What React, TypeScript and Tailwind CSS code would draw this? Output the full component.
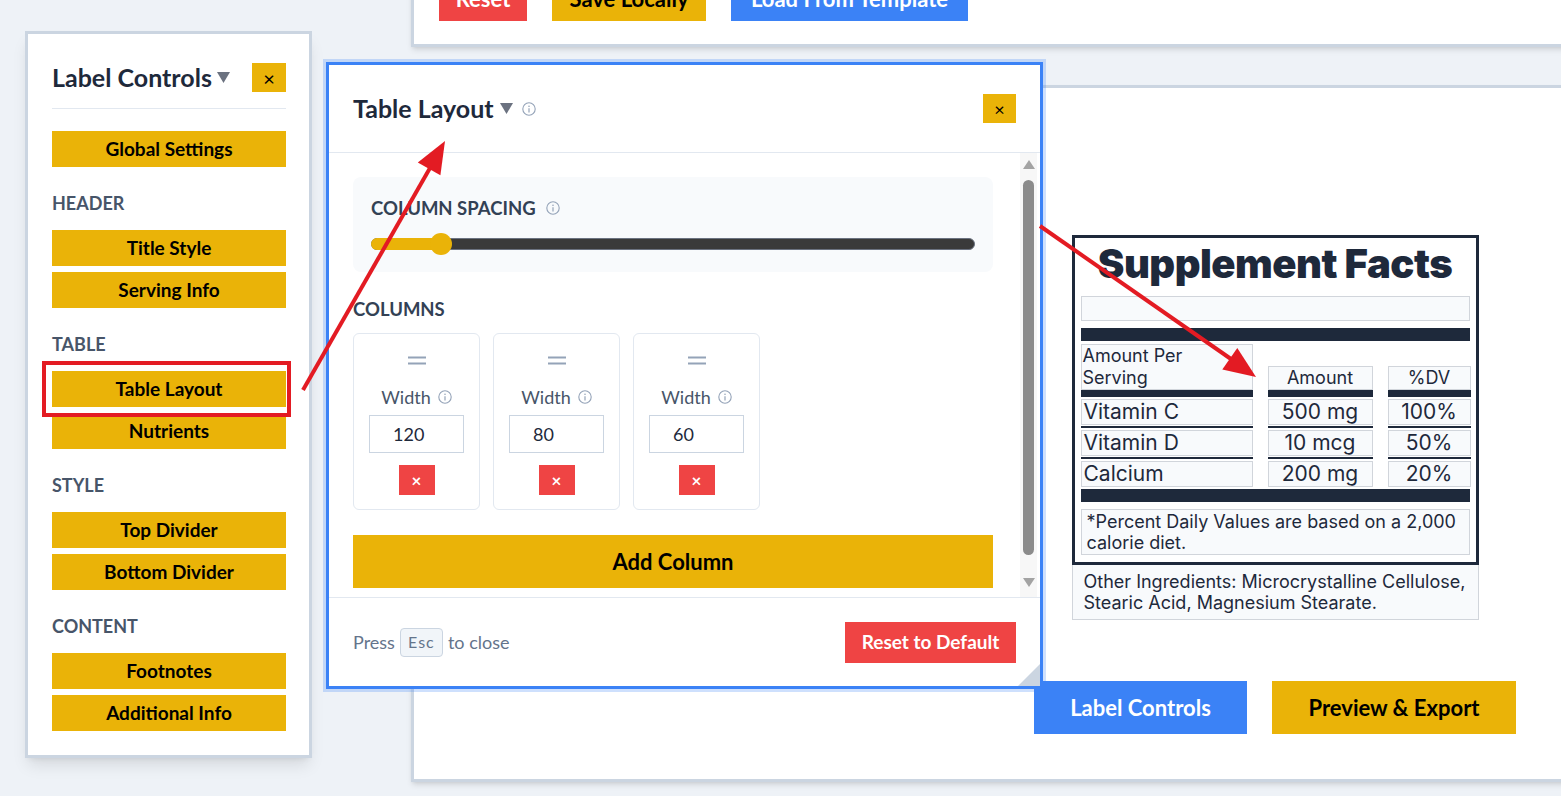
import React from "react";

/* small drawings */
function InfoIcon({ size = 14 }: { size?: number }) {
    return (
        <svg width={size} height={size} viewBox="0 0 14 14" fill="none">
            <circle cx="7" cy="7" r="6.2" stroke="#94a3b8" strokeWidth="1.1" />
            <circle cx="7" cy="4.2" r="0.8" fill="#94a3b8" />
            <path d="M7 6.2v4.4" stroke="#94a3b8" strokeWidth="1.2" />
        </svg>
    );
}

function Caret() {
    return (
        <svg width="13" height="11" viewBox="0 0 13 11">
            <polygon points="0,0 13,0 6.5,11" fill="#6b7280" />
        </svg>
    );
}

function Handle() {
    return (
        <svg width="20" height="9" viewBox="0 0 20 9">
            <path d="M1 1.5h18M1 7.5h18" stroke="#94a3b8" strokeWidth="2" />
        </svg>
    );
}

function TopBar() {
    return (
        <div className="-mt-[25px] w-[1725px] border-b-[3px] border-l-[3px] border-[#cbd5e1] bg-white pb-[23px] pl-[25px] shadow-md">
            <div className="flex gap-[25px] text-[22px] font-bold">
                <button className="h-[46px] w-[88px] bg-[#ef4444] text-white">Reset</button>
                <button className="h-[46px] w-[154px] bg-[#eab308] text-black">Save Locally</button>
                <button className="h-[46px] w-[237px] bg-[#3b82f6] text-white">Load From Template</button>
            </div>
        </div>
    );
}

function SupplementLabel() {
    const rows = [
        ["Vitamin C", "500 mg", "100%"],
        ["Vitamin D", "10 mcg", "50%"],
        ["Calcium", "200 mg", "20%"],
    ];
    const cell = "h-[26px] border border-[#d1d5db] bg-[#f8fafc] text-[21px] leading-[24px]";
    return (
        <div className="w-[407px] font-['Inter',sans-serif] text-[#1e293b]">
            <div className="border-[3px] border-[#1e293b] px-[6px] pb-[7px]">
                <h1 className="mt-[1px] h-[50px] text-center text-[40px] font-black leading-[50px] tracking-[-0.5px]">
                    Supplement Facts
                </h1>
                <div className="mt-[7px] h-[25px] border border-[#d1d5db] bg-[#f8fafc]" />
                <div className="mt-[7px] h-[13px] bg-[#1e293b]" />
                <div className="mt-[3px] grid grid-cols-[172px_105px_83px] items-end gap-x-[15px]">
                    <div className="h-[46px] border border-[#d1d5db] bg-[#f8fafc] pl-[1px] text-[18px] leading-[22px]">
                        Amount Per<br />Serving
                    </div>
                    <div className="h-[24px] border border-[#d1d5db] bg-[#f8fafc] text-center text-[18px] leading-[22px]">Amount</div>
                    <div className="h-[24px] border border-[#d1d5db] bg-[#f8fafc] text-center text-[18px] leading-[22px]">%DV</div>
                    <div className="h-[7px] bg-[#1e293b]" />
                    <div className="h-[7px] bg-[#1e293b]" />
                    <div className="h-[7px] bg-[#1e293b]" />
                    {rows.map((row, i) => (
                        <React.Fragment key={row[0]}>
                            {i > 0 && (
                                <>
                                    <div className="mt-[1px] h-[2px] bg-[#1e293b]" />
                                    <div className="mt-[1px] h-[2px] bg-[#1e293b]" />
                                    <div className="mt-[1px] h-[2px] bg-[#1e293b]" />
                                </>
                            )}
                            <div className={`mt-[2px] pl-[2px] ${cell}`}>{row[0]}</div>
                            <div className={`mt-[2px] text-center ${cell}`}>{row[1]}</div>
                            <div className={`mt-[2px] text-center ${cell}`}>{row[2]}</div>
                        </React.Fragment>
                    ))}
                </div>
                <div className="mt-[2px] h-[13px] bg-[#1e293b]" />
                <div className="mt-[7px] h-[46px] border border-[#d1d5db] bg-[#f8fafc] px-[5px] pt-[1px] text-[18px] leading-[21px]">
                    *Percent Daily Values are based on a 2,000 calorie diet.
                </div>
            </div>
            <div className="h-[55px] border border-t-0 border-[#d1d5db] bg-[#f8fafc] px-[11px] pt-[6px] text-[18px] leading-[21px]">
                Other Ingredients: Microcrystalline Cellulose, Stearic Acid, Magnesium Stearate.
            </div>
        </div>
    );
}

function MainCard() {
    return (
        <div className="mt-[38px] flex h-[697px] w-[1725px] flex-col items-center border-y-[3px] border-l-[3px] border-[#cbd5e1] bg-white pt-[147px] shadow-md">
            <SupplementLabel />
            <div className="mt-[61px] flex gap-[25px] text-[22px] font-bold">
                <button className="h-[53px] w-[213px] bg-[#3b82f6] text-white">Label Controls</button>
                <button className="h-[53px] w-[244px] bg-[#eab308] text-black">Preview &amp; Export</button>
            </div>
        </div>
    );
}

function ControlsPanel() {
    const sections = [
        { title: "", items: ["Global Settings"] },
        { title: "Header", items: ["Title Style", "Serving Info"] },
        { title: "Table", items: ["Table Layout", "Nutrients"] },
        { title: "Style", items: ["Top Divider", "Bottom Divider"] },
        { title: "Content", items: ["Footnotes", "Additional Info"] },
    ];
    return (
        <div className="absolute left-[25px] top-[31px] h-[727px] w-[287px] border-[3px] border-[#cbd5e1] bg-white pl-[24px] pr-[23px] pt-[29px] shadow-lg">
            <div className="flex h-[46px] items-start justify-between border-b border-[#e2e8f0]">
                <div className="flex h-[29px] items-center gap-[5px] text-[25px] font-bold text-[#1e293b]">
                    Label Controls
                    <Caret />
                </div>
                <button className="flex h-[29px] w-[34px] items-center justify-center bg-[#eab308] text-[20px] leading-none text-black">
                    ×
                </button>
            </div>
            <div className="pt-[22px]">
                {sections.map((section) => (
                    <div key={section.items[0]}>
                        {section.title && (
                            <div className="mb-[15px] mt-[24px] text-[18px] font-bold uppercase leading-[24px] text-[#475569]">
                                {section.title}
                            </div>
                        )}
                        <div className="flex flex-col gap-[6px]">
                            {section.items.map((item) => (
                                <button key={item} className="h-[36px] w-full bg-[#eab308] text-[19px] font-bold text-black">
                                    {item}
                                </button>
                            ))}
                        </div>
                    </div>
                ))}
            </div>
        </div>
    );
}

function ColumnCard({ width }: { width: string }) {
    return (
        <div className="flex h-[177px] w-[127px] flex-col items-center rounded-md border border-[#e2e8f0] pt-[22px]">
            <Handle />
            <div className="mt-[20px] flex items-center gap-[7px] text-[18px] leading-[24px] text-[#475569]">
                Width
                <InfoIcon />
            </div>
            <div className="mt-[6px] flex h-[38px] w-[95px] items-center border border-[#cbd5e1] pl-[23px] text-[18px] text-[#1e293b]">
                {width}
            </div>
            <button className="mt-[12px] flex h-[30px] w-[36px] items-center justify-center bg-[#ef4444] text-[17px] font-bold leading-none text-white">
                ×
            </button>
        </div>
    );
}

function Scrollbar() {
    return (
        <div className="mr-[3px] flex w-[17px] flex-col items-center bg-[#f7f7f7] pt-[7px]">
            <svg width="12" height="9" viewBox="0 0 12 9">
                <polygon points="6,0 12,9 0,9" fill="#a3a3a3" />
            </svg>
            <div className="mt-[11px] h-[375px] w-[11px] rounded-full bg-[#8b8b8b]" />
            <svg className="mt-[23px]" width="12" height="9" viewBox="0 0 12 9">
                <polygon points="0,0 12,0 6,9" fill="#a3a3a3" />
            </svg>
        </div>
    );
}

function TableLayoutModal() {
    return (
        <div className="absolute left-[326px] top-[62px] flex h-[627px] w-[717px] flex-col border-[3px] border-[#3b82f6] bg-white shadow-[0_0_0_3px_rgba(59,130,246,0.25)]">
            <div className="flex h-[88px] shrink-0 items-center justify-between border-b border-[#e2e8f0] px-[24px]">
                <div className="flex items-center gap-[6px] text-[25px] font-bold text-[#1e293b]">
                    Table Layout
                    <Caret />
                    <span className="ml-[3px]">
                        <InfoIcon />
                    </span>
                </div>
                <button className="flex h-[29px] w-[33px] items-center justify-center bg-[#eab308] text-[18px] leading-none text-black">
                    ×
                </button>
            </div>
            <div className="flex min-h-0 flex-1 overflow-hidden">
                <div className="flex-1 pl-[24px] pr-[27px] pt-[24px]">
                    <div className="h-[95px] rounded-lg bg-[#f8fafc] px-[18px] pt-[19px]">
                        <div className="flex items-center gap-[10px] text-[18.5px] font-bold uppercase leading-[24px] text-[#334155]">
                            Column Spacing
                            <InfoIcon />
                        </div>
                        <div className="relative mt-[13px] flex h-[22px] items-center">
                            <div className="h-[12px] w-full rounded-full border border-[#6b7280] bg-[#3a3a3a]" />
                            <div className="absolute left-0 h-[12px] w-[70px] rounded-l-full bg-[#eab308]" />
                            <div className="absolute left-[59px] h-[22px] w-[22px] rounded-full bg-[#eab308]" />
                        </div>
                    </div>
                    <div className="mb-[12px] mt-[25px] text-[18.5px] font-bold uppercase leading-[24px] text-[#334155]">
                        Columns
                    </div>
                    <div className="flex gap-[13px]">
                        <ColumnCard width="120" />
                        <ColumnCard width="80" />
                        <ColumnCard width="60" />
                    </div>
                    <button className="mt-[25px] h-[53px] w-full bg-[#eab308] text-[22px] font-bold text-black">
                        Add Column
                    </button>
                </div>
                <Scrollbar />
            </div>
            <div className="relative flex h-[89px] shrink-0 items-center justify-between border-t border-[#e2e8f0] px-[24px]">
                <div className="flex items-center gap-[5px] text-[18px] text-[#64748b]">
                    Press
                    <span className="flex h-[29px] w-[43px] items-center justify-center rounded border border-[#cbd5e1] bg-[#f1f5f9] text-[16px] tracking-[1px]">
                        Esc
                    </span>
                    to close
                </div>
                <button className="h-[41px] w-[171px] bg-[#ef4444] text-[19px] font-bold text-white">
                    Reset to Default
                </button>
                <svg className="absolute bottom-0 right-0" width="22" height="22" viewBox="0 0 22 22">
                    <polygon points="22,0 22,22 0,22" fill="#cbd5e1" />
                </svg>
            </div>
        </div>
    );
}

function Annotations() {
    return (
        <svg className="pointer-events-none absolute left-0 top-0" width="1561" height="796" viewBox="0 0 1561 796">
            <rect x="44" y="363" width="245" height="52" fill="none" stroke="#e31b23" strokeWidth="4" />
            <line x1="303" y1="390" x2="430" y2="168" stroke="#e31b23" strokeWidth="4" />
            <polygon points="445,141 440.4,175.2 417.8,162.4" fill="#e31b23" />
            <line x1="1040" y1="226" x2="1231" y2="359" stroke="#e31b23" strokeWidth="4" />
            <polygon points="1256,377 1222.3,369.4 1237.3,348" fill="#e31b23" />
        </svg>
    );
}

export default function App() {
    return (
        <div className="relative h-[796px] w-[1561px] overflow-hidden bg-[#eef2f7] font-['Lato',sans-serif]">
            <div className="flex flex-col pl-[411px]">
                <TopBar />
                <MainCard />
            </div>
            <ControlsPanel />
            <TableLayoutModal />
            <Annotations />
        </div>
    );
}
